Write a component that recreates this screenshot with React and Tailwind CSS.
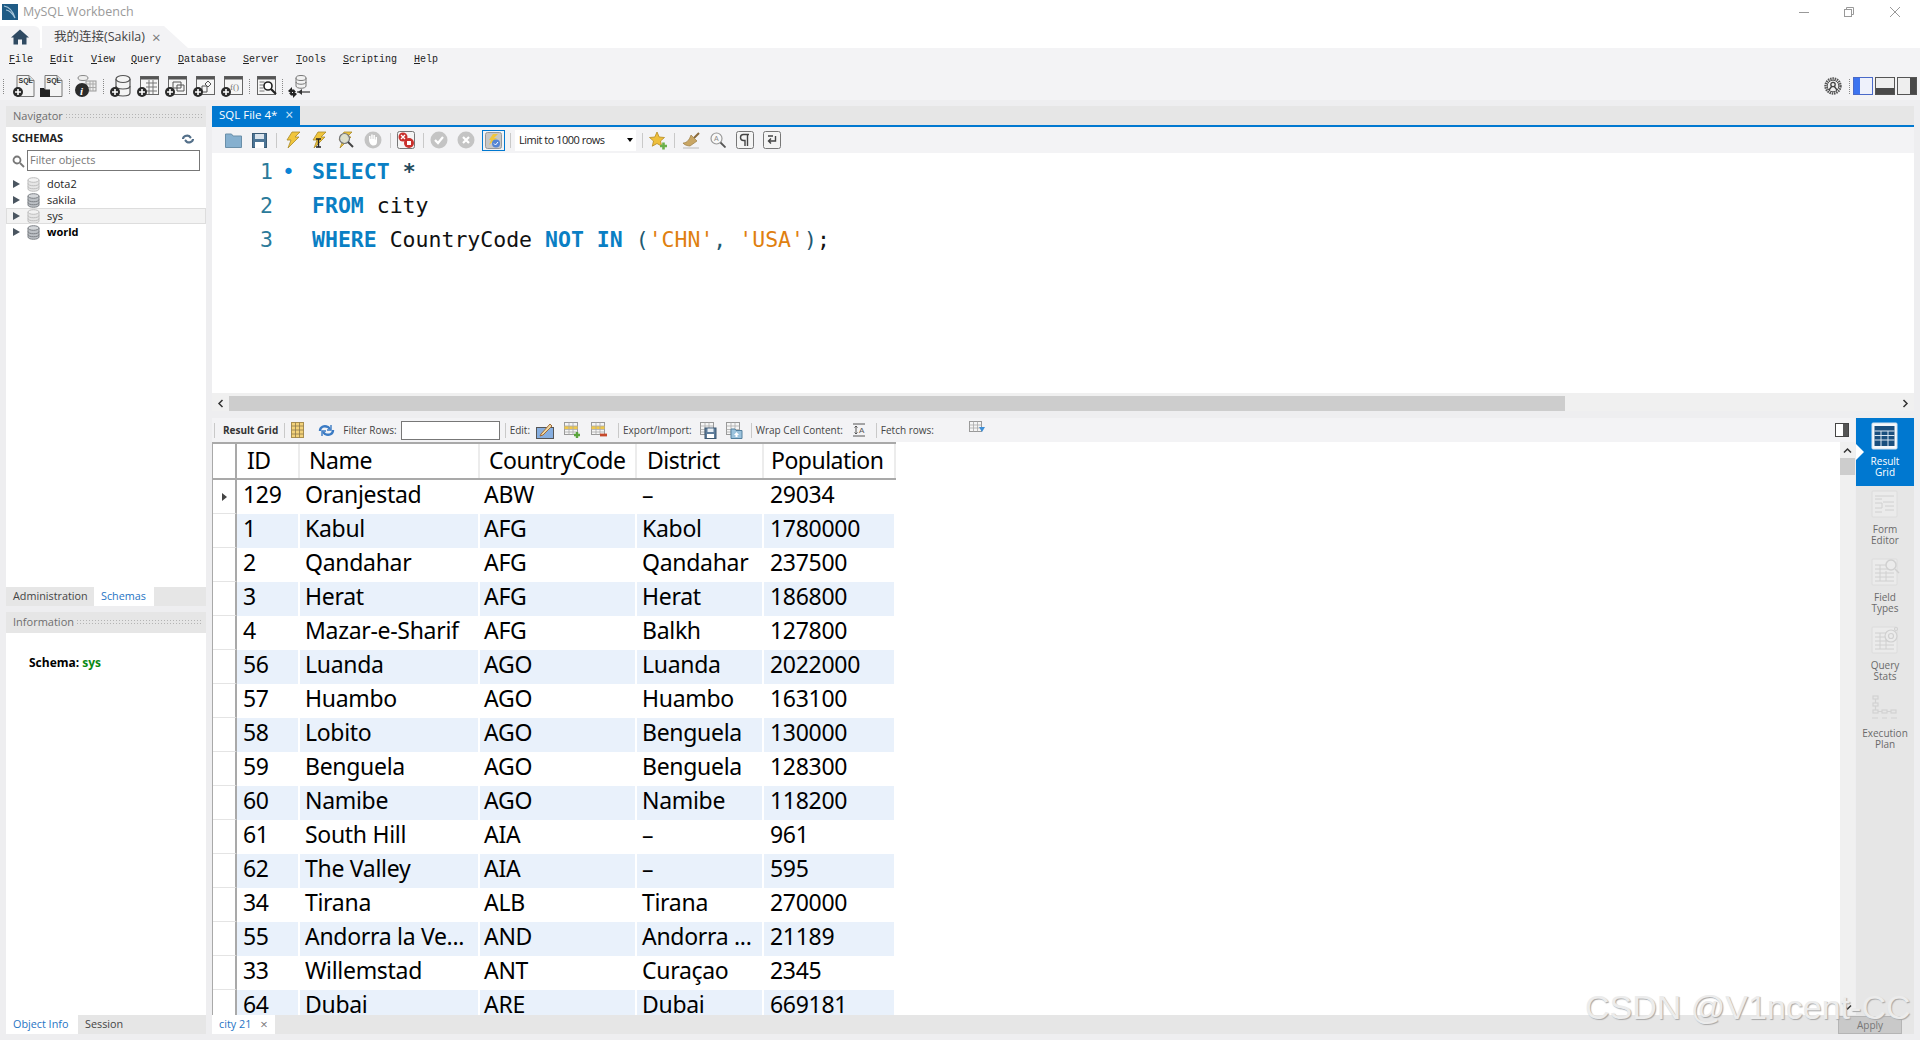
import React from 'react';

const rows = [
  ['129', 'Oranjestad', 'ABW', '–', '29034'],
  ['1', 'Kabul', 'AFG', 'Kabol', '1780000'],
  ['2', 'Qandahar', 'AFG', 'Qandahar', '237500'],
  ['3', 'Herat', 'AFG', 'Herat', '186800'],
  ['4', 'Mazar-e-Sharif', 'AFG', 'Balkh', '127800'],
  ['56', 'Luanda', 'AGO', 'Luanda', '2022000'],
  ['57', 'Huambo', 'AGO', 'Huambo', '163100'],
  ['58', 'Lobito', 'AGO', 'Benguela', '130000'],
  ['59', 'Benguela', 'AGO', 'Benguela', '128300'],
  ['60', 'Namibe', 'AGO', 'Namibe', '118200'],
  ['61', 'South Hill', 'AIA', '–', '961'],
  ['62', 'The Valley', 'AIA', '–', '595'],
  ['34', 'Tirana', 'ALB', 'Tirana', '270000'],
  ['55', 'Andorra la Ve...', 'AND', 'Andorra ...', '21189'],
  ['33', 'Willemstad', 'ANT', 'Curaçao', '2345'],
  ['64', 'Dubai', 'ARE', 'Dubai', '669181'],
];

const menus = [
  ['File', 'w-[41px]'], ['Edit', 'w-[41px]'], ['View', 'w-[40px]'], ['Query', 'w-[47px]'],
  ['Database', 'w-[65px]'], ['Server', 'w-[53px]'], ['Tools', 'w-[47px]'], ['Scripting', 'w-[71px]'], ['Help', 'w-[30px]'],
];

const colClasses = ['w-[63px] pl-[6px]', 'w-[180px] pl-[5px]', 'w-[157px] pl-[4px]', 'w-[127px] pl-[5px]', 'w-[132px] pl-[6px]'];

const uiFont = 'font-["Open_Sans",sans-serif]';

// main toolbar icons, all on a 24x24 box
const Plus = () => (
  <g>
    <circle cx="6" cy="18" r="5" fill="#2b2b2b" />
    <path d="M3 18h6M6 15v6" stroke="#fff" strokeWidth="1.6" />
  </g>
);

const SqlDoc = ({ folder }) => (
  <svg width="24" height="24" viewBox="0 0 24 24">
    <path d="M5 1.5h12l5 5v16H5z" fill="#f4f4f4" stroke="#777" />
    <path d="M17 1.500v5h5" fill="#ddd" stroke="#777" />
    <text x="6.500" y="9" fontSize="7" fontWeight="700" fill="#333" fontFamily="Liberation Sans">SQL</text>
    {folder ? <path d="M0 23v-9h4l1 1.500h5V23z" fill="#222" /> : <Plus />}
  </svg>
);

const InfoIcon = () => (
  <svg width="24" height="24" viewBox="0 0 24 24">
    <ellipse cx="9" cy="4" rx="5" ry="2.500" fill="#eee" stroke="#888" />
    <rect x="12" y="7" width="10" height="10" fill="#eee" stroke="#999" />
    <path d="M12 10h10M12 13.500h10M16 7v10M19 7v10" stroke="#aaa" />
    <circle cx="8" cy="16" r="7" fill="#2b2b2b" />
    <text x="6" y="20.500" fontSize="11" fontWeight="700" fontStyle="italic" fill="#fff" fontFamily="Liberation Serif">i</text>
  </svg>
);

const DbPlus = () => (
  <svg width="24" height="24" viewBox="0 0 24 24">
    <path d="M7 5v14c0 4 14 4 14 0V5" fill="#f4f4f4" stroke="#555" strokeWidth="1.200" />
    <ellipse cx="14" cy="5" rx="7" ry="3.500" fill="#f4f4f4" stroke="#555" strokeWidth="1.200" />
    <path d="M7 12c0 4 14 4 14 0" fill="none" stroke="#555" strokeWidth="1.200" />
    <Plus />
  </svg>
);

const Frame = ({ children, plus = true }) => (
  <svg width="24" height="24" viewBox="0 0 24 24">
    <rect x="4.500" y="2.500" width="18" height="18" fill="#f6f6f6" stroke="#666" />
    <rect x="4.500" y="2.500" width="18" height="3" fill="#555" />
    {children}
    {plus && <Plus />}
  </svg>
);

const Migration = () => (
  <svg width="24" height="24" viewBox="0 0 24 24">
    <path d="M9 4v8c0 3 10 3 10 0V4M9 8c0 3 10 3 10 0" fill="#f2f2f2" stroke="#777" />
    <ellipse cx="14" cy="4" rx="5" ry="2.500" fill="#f2f2f2" stroke="#777" />
    <path d="M10 18h13" stroke="#444" strokeWidth="1.300" />
    <path d="M1 17l4-4v2.500h2l2 2.500H5v2zM10 20l-4 4v-2.500H4L2 19h4v-2z" fill="#222" />
    <path d="M15 15l-4 3 4 3z" fill="#333" />
  </svg>
);

const Sep = ({ className = '' }) => <div className={`w-px h-[15px] bg-[#c9c9c9] shrink-0 ${className}`} />;
const DotSep = ({ className = '' }) => <div className={`w-px h-[15px] shrink-0 border-l border-dotted border-[#888] ${className}`} />;

// sql editor toolbar icons
const Bolt = ({ cursor, search }) => (
  <svg width="18" height="18" viewBox="0 0 18 18">
    <path d="M8 1h8l-5 5h4L4 17l3-8H3z" fill="#f0c53c" stroke="#a98a2a" strokeWidth=".8" />
    {cursor && <path d="M6 8h5M6 16h5M8.500 8v8" stroke="#222" strokeWidth="1.400" />}
    {search && (
      <g>
        <circle cx="8.500" cy="7.500" r="5" fill="#dbe6ef" fillOpacity=".8" stroke="#777" strokeWidth="1.200" />
        <path d="M12 11l5 5" stroke="#444" strokeWidth="2" />
      </g>
    )}
  </svg>
);

const Disc = ({ children }) => (
  <svg width="18" height="18" viewBox="0 0 18 18">
    <circle cx="9" cy="9" r="8.500" fill="#c4c4c4" />
    {children}
  </svg>
);

const SmallBox = ({ children }) => (
  <svg width="18" height="18" viewBox="0 0 18 18">
    <rect x=".5" y=".5" width="17" height="17" rx="2" fill="#f4f4f4" stroke="#777" />
    {children}
  </svg>
);

const GridIcon = ({ badge, yellow }) => (
  <svg width="18" height="18" viewBox="0 0 18 18">
    <rect x="1.500" y="1.500" width="13" height="12" fill="#f5f5f5" stroke="#999" />
    {yellow && <rect x="1.500" y="5" width="13" height="3" fill="#f0c84a" />}
    <path d="M1.500 5h13M1.500 8.500h13M1.500 11h13M6 1.500v12M10 1.500v12" stroke="#aaa" strokeWidth=".8" />
    {badge === 'add' && <path d="M11 14h6M14 11v6" stroke="#5aa43c" strokeWidth="2.400" />}
    {badge === 'del' && <path d="M10 14h7" stroke="#c6492c" strokeWidth="2.800" />}
    {badge === 'save' && (
      <g>
        <rect x="6" y="7" width="11" height="10.500" fill="#5d7c9b" stroke="#3c5770" />
        <rect x="8.500" y="7.500" width="6" height="3.500" fill="#e8eef4" />
        <rect x="8" y="13" width="7" height="4" fill="#fff" />
      </g>
    )}
    {badge === 'import' && (
      <g>
        <path d="M6 8h4l1 1.500h6V17.500H6z" fill="#9cc3dd" stroke="#54809e" />
        <path d="M11.500 11l-2.500 3h1.500v2h2v-2H14z" fill="#fff" />
      </g>
    )}
  </svg>
);

const SideIcon = ({ type, active }) => {
  if (type === 'plan') {
    return (
      <svg width="28" height="28" viewBox="0 0 28 28" fill="none" stroke="#d2d2d2" strokeWidth="1.200">
        <rect x="2" y="2" width="5" height="3" />
        <rect x="2" y="9" width="5" height="3" />
        <rect x="2" y="16" width="5" height="3" />
        <rect x="11" y="16" width="5" height="3" />
        <rect x="20" y="16" width="5" height="3" />
        <path d="M7 17.500h4M16 17.500h4M1 24h6M11 24h5M20 24h6M4.500 5v4M4.500 12v4" />
      </svg>
    );
  }
  const line = active ? '#1f5a8a' : '#d0d0d0';
  return (
    <svg width="30" height="28" viewBox="0 0 30 28">
      <rect x="2" y="1" width="25" height="26" rx="1" fill={active ? '#f5f8fb' : '#ebebeb'} stroke={active ? '#cfe0ee' : '#dcdcdc'} />
      {active && (
        <g>
          <rect x="4.500" y="4" width="20" height="20" fill="#1a4f7e" />
          <path d="M4.500 9h20M4.500 13.500h20M4.500 18h20M11 9v15M18 9v15" stroke="#dce8f2" strokeWidth="1" />
        </g>
      )}
      {type === 'form' && <path d="M5 6h19M5 9h7M5 13h7v5H5M13 12h11M15 16h9M15 20h9M5 22h7" fill="none" stroke={line} />}
      {(type === 'field' || type === 'stats') && (
        <path d="M5 7h12M5 11h13M5 15h19M5 19h19M5 23h19M10 7v16M16 13v10" fill="none" stroke={line} />
      )}
      {type === 'field' && (
        <g fill="#ebebeb" stroke="#d0d0d0" strokeWidth="1.500">
          <circle cx="21" cy="7" r="5" />
          <path d="M25 11l4 4" />
        </g>
      )}
      {type === 'stats' && (
        <g fill="#ebebeb" stroke="#d0d0d0" strokeWidth="1.200">
          <circle cx="21" cy="10" r="6" />
          <circle cx="21" cy="10" r="2.500" />
          <circle cx="26" cy="3" r="1.500" />
        </g>
      )}
    </svg>
  );
};

const DbIcon = ({ dark }) => (
  <svg width="13" height="15" viewBox="0 0 13 15">
    <path d="M1 3v9c0 3 11 3 11 0V3" fill={dark ? '#bcc0c5' : '#e6e6e6'} stroke={dark ? '#7d8186' : '#bdbdbd'} />
    <ellipse cx="6.500" cy="3" rx="5.500" ry="2.300" fill={dark ? '#d4d7da' : '#f2f2f2'} stroke={dark ? '#7d8186' : '#bdbdbd'} />
    <path d="M1 6.500c0 3 11 3 11 0M1 9.500c0 3 11 3 11 0" fill="none" stroke={dark ? '#7d8186' : '#bdbdbd'} />
  </svg>
);

const TreeRow = ({ name, dark, bold, selected }) => (
  <div className={`flex items-center h-4 pl-[7px] ${selected ? 'bg-[#f3f3f3] outline outline-[#dddddd] -outline-offset-1' : ''}`}>
    <span className="w-0 h-0 border-y-[4px] border-y-transparent border-l-[7px] border-l-[#4a5560]" />
    <span className="ml-[7px] flex"><DbIcon dark={dark} /></span>
    <span className={`ml-[7px] text-[11px] ${bold ? 'font-bold text-black' : 'text-[#222]'}`}>{name}</span>
  </div>
);

const PanelHeader = ({ title }) => (
  <div className="h-[21px] bg-[#e6e6e6] flex items-center pl-[7px] pr-1 gap-[2px] shrink-0">
    <span className="text-[11px] text-[#6e6e6e]">{title}</span>
    <div className="flex-1 h-[7px] bg-[radial-gradient(#b4b4b4_1px,transparent_1px)] bg-[length:3px_3px]" />
  </div>
);

const Tab = ({ label, active, w, close }) => (
  <div className={`h-[19px] flex items-center pb-px text-[10.800px] ${w} ${active ? 'bg-white text-[#1f74c4]' : 'text-[#444]'}`}>
    <span className="pl-[7px]">{label}</span>
    {close && <span className="ml-[9px] text-[13px] leading-none text-[#777]">×</span>}
  </div>
);

const GridHeadCell = ({ children, className }) => (
  <div className={`h-[34px] flex items-center pb-[2px] border-r-2 border-[#ececec] tracking-[-0.5px] ${className}`}>{children}</div>
);

export default function App() {
  return (
    <div className={`relative w-[1920px] h-[1040px] overflow-hidden flex flex-col bg-[#eeeef0] ${uiFont}`}>
      {/* title bar */}
      <div className="h-[26px] bg-white flex items-center pb-[2px] shrink-0">
        <svg className="ml-[2px]" width="16" height="16" viewBox="0 0 16 16">
          <rect width="16" height="16" fill="#1f5c86" />
          <path d="M2 2c6 1 9 5 11 12-3-5-6-8-9-8" fill="none" stroke="#a8c6da" strokeWidth="1.200" />
        </svg>
        <span className="ml-[5px] text-[12.500px] text-[#9a9a9a]">MySQL Workbench</span>
        <div className="ml-auto flex items-center">
          <div className="w-[10px] h-px bg-[#999] mr-[35px]" />
          <svg className="mr-[35px]" width="10" height="10" viewBox="0 0 10 10" fill="none" stroke="#999">
            <path d="M2.500 2.500V.5h7v7h-2" />
            <rect x=".5" y="2.500" width="7" height="7" />
          </svg>
          <svg className="mr-[19px]" width="12" height="12" viewBox="0 0 12 12" stroke="#999">
            <path d="M1 1l10 10M11 1L1 11" />
          </svg>
        </div>
      </div>

      {/* connection tabs */}
      <div className="h-[22px] bg-white flex items-end shrink-0">
        <div className="w-[40px] h-[22px] bg-[#f3f3f5] rounded-tr-md flex items-center justify-center">
          <svg width="18" height="16" viewBox="0 0 18 16" fill="#2f4a62">
            <path d="M9 .5L0 8.500h2.500V15.500h4.500v-5h4v5h4.500V8.500H18z" />
          </svg>
        </div>
        <div className="w-[146px] h-[22px] ml-[2px] bg-[#f3f3f5] flex items-center pl-[12px] text-[12.500px] text-[#444] [clip-path:polygon(0_0,122px_0,100%_100%,0_100%)] font-['Open_Sans','Noto_Sans_CJK_SC',sans-serif]">
          我的连接(Sakila)
          <span className="ml-[7px] text-[15px] leading-none text-[#777]">×</span>
        </div>
      </div>

      {/* menu */}
      <div className="h-[22px] bg-[#f3f3f5] flex items-center pl-[9px] shrink-0 font-['Liberation_Mono',monospace] text-[10px] text-[#222]">
        {menus.map(([label, w]) => (
          <span key={label} className={w}>
            <span className="underline">{label[0]}</span>
            {label.slice(1)}
          </span>
        ))}
      </div>

      {/* main toolbar */}
      <div className="h-[30px] bg-[#f3f3f5] flex items-center pl-[3px] pt-[2px] shrink-0">
        <DotSep />
        <div className="ml-[8px] flex"><SqlDoc /></div>
        <div className="ml-[4px] flex"><SqlDoc folder /></div>
        <DotSep className="ml-[5px]" />
        <div className="ml-[4px] flex"><InfoIcon /></div>
        <DotSep className="ml-[5px]" />
        <div className="ml-[5px] flex"><DbPlus /></div>
        <div className="ml-[3px] flex">
          <Frame><path d="M10 9h11M10 13h11M10 17h11M13 6v14M17 6v14" stroke="#777" /></Frame>
        </div>
        <div className="ml-[4px] flex">
          <Frame><path d="M9 8h8v6H9zM13 11h7v6h-7z" fill="#f6f6f6" stroke="#555" /></Frame>
        </div>
        <div className="ml-[4px] flex">
          <Frame><path d="M16 7l3 3-3 3-3-3zM10 12h5v6h-5z" fill="#f6f6f6" stroke="#555" /></Frame>
        </div>
        <div className="ml-[4px] flex">
          <Frame>
            <text x="10" y="16" fontSize="9" fill="#777" fontFamily="Liberation Serif">f()</text>
          </Frame>
        </div>
        <DotSep className="ml-[5px]" />
        <div className="ml-[3px] flex">
          <Frame plus={false}>
            <path d="M6.500 8h5M6.500 11h4M6.500 14h4M6.500 17h5" stroke="#777" />
            <circle cx="15" cy="12" r="4" fill="#fff" stroke="#222" strokeWidth="1.600" />
            <path d="M18 15l5 5" stroke="#222" strokeWidth="2.200" />
          </Frame>
        </div>
        <DotSep className="ml-[5px]" />
        <div className="ml-[4px] flex"><Migration /></div>
        <div className="ml-auto flex items-center">
          <svg width="18" height="18" viewBox="0 0 18 18">
            <circle cx="9" cy="9" r="7.500" fill="none" stroke="#555" strokeWidth="2.400" strokeDasharray="1.500 .8" />
            <circle cx="9" cy="9" r="5.800" fill="#eee" stroke="#555" />
            <circle cx="9" cy="7.500" r="2.200" fill="none" stroke="#444" strokeWidth="1.300" />
            <path d="M5 13l3-4M13 13l-3-4" stroke="#444" strokeWidth="1.300" />
          </svg>
          <DotSep className="ml-[7px]" />
          <div className="ml-[3px] w-[20px] h-[18px] border border-[#4a69c8] bg-[#eef1fb] flex">
            <div className="w-[6px] bg-[#3d74f0]" />
          </div>
          <div className="ml-[2px] w-[20px] h-[18px] border border-[#555] bg-[#eee] flex items-end">
            <div className="w-full h-[6px] bg-[#4a4a4a]" />
          </div>
          <div className="ml-[2px] w-[20px] h-[18px] border border-[#555] bg-[#eee] flex justify-end">
            <div className="w-[6px] bg-[#4a4a4a]" />
          </div>
          <div className="w-[3px]" />
        </div>
      </div>

      {/* body */}
      <div className="flex-1 flex pt-[6px] pl-[6px] pr-[6px] pb-[6px] min-h-0">
        {/* navigator */}
        <div className="w-[200px] shrink-0 flex flex-col">
          <PanelHeader title="Navigator" />
          <div className="h-[460px] bg-white">
            <div className="h-[23px] flex items-center justify-between pl-[6px] pr-[12px]">
              <span className="text-[11px] font-bold tracking-[-0.1px] text-[#222]">SCHEMAS</span>
              <svg width="12" height="10" viewBox="0 0 12 10" fill="none" stroke="#54708a" strokeWidth="2.200">
                <path d="M1 5c0-3 4-4 6-3l2 2M11 5c0 3-4 4-6 3L3 6" />
              </svg>
            </div>
            <div className="flex items-center pl-[5px] h-[21px]">
              <svg width="14" height="14" viewBox="0 0 14 14" fill="none" stroke="#777" strokeWidth="1.800">
                <circle cx="6" cy="6" r="3.500" />
                <path d="M9 9l4 4" />
              </svg>
              <div className="ml-[2px] w-[173px] h-[21px] border border-[#777] text-[11px] text-[#777] pl-[2px] flex items-center">
                Filter objects
              </div>
            </div>
            <div className="pt-[5px]">
              <TreeRow name="dota2" />
              <TreeRow name="sakila" dark />
              <TreeRow name="sys" selected />
              <TreeRow name="world" dark bold />
            </div>
          </div>
          <div className="h-[19px] bg-[#e6e6e6] flex shrink-0">
            <Tab label="Administration" w="w-[88px]" />
            <Tab label="Schemas" w="w-[60px]" active />
          </div>
          <div className="h-[6px] shrink-0" />
          <PanelHeader title="Information" />
          <div className="flex-1 bg-white pl-[23px] pt-[21px] text-[12px] font-bold text-black">
            Schema: <span className="text-[#0a8a14]">sys</span>
          </div>
          <div className="h-[19px] bg-[#e6e6e6] flex shrink-0">
            <Tab label="Object Info" w="w-[72px]" active />
            <Tab label="Session" w="w-[60px]" />
          </div>
        </div>

        {/* main area */}
        <div className="ml-[6px] flex-1 flex flex-col min-w-0">
          {/* sql tab strip */}
          <div className="h-[21px] shrink-0 flex bg-[#e6e6e6] border-b-2 border-[#0078d0]">
            <div className="w-[88px] bg-[#0078d0] text-white text-[11.500px] pl-[7px] pb-px flex items-center">
              SQL File 4*
              <span className="ml-[8px] text-[14px] leading-none text-[#cfe4f5]">×</span>
            </div>
          </div>

          {/* editor toolbar */}
          <div className="h-[26px] shrink-0 bg-[#f3f3f5] flex items-center pl-[13px]">
            <svg width="17" height="15" viewBox="0 0 17 15">
              <path d="M.5 14.500V1h6l1.500 2h8.500v11.500z" fill="#86b0cf" stroke="#6a8fa9" />
            </svg>
            <svg className="ml-[10px]" width="15" height="15" viewBox="0 0 15 15">
              <rect x=".5" y=".5" width="14" height="14" fill="#4d7596" stroke="#3b5b75" />
              <rect x="3" y="1" width="9" height="5" fill="#dbe4ec" />
              <rect x="3" y="9" width="9" height="6" fill="#fff" />
            </svg>
            <Sep className="ml-[9px]" />
            <div className="ml-[7px] flex"><Bolt /></div>
            <div className="ml-[8px] flex"><Bolt cursor /></div>
            <div className="ml-[8px] flex"><Bolt search /></div>
            <div className="ml-[10px] flex">
              <Disc>
                <path d="M5 9V5h1.500v3h.7V3.500h1.500V8h.7V4h1.500v4.500h.7V6h1.400v5c0 2.500-1.500 3.500-3.500 3.500S5.500 13 5 9z" fill="#fff" />
              </Disc>
            </div>
            <Sep className="ml-[8px]" />
            <div className="ml-[6px] flex">
              <SmallBox>
                <circle cx="6" cy="6" r="4.500" fill="#c9302c" />
                <path d="M4 4l4 4M8 4l-4 4" stroke="#fff" strokeWidth="1.300" />
                <circle cx="12" cy="12" r="5" fill="#c9302c" />
                <rect x="10" y="10" width="4" height="4" fill="#fff" />
              </SmallBox>
            </div>
            <Sep className="ml-[8px]" />
            <div className="ml-[6px] flex">
              <Disc><path d="M5 9l3 3 5-6" fill="none" stroke="#fff" strokeWidth="2.200" /></Disc>
            </div>
            <div className="ml-[9px] flex">
              <Disc><path d="M6 6l6 6M12 6l-6 6" stroke="#fff" strokeWidth="2.200" /></Disc>
            </div>
            <div className="ml-[7px] w-[23px] h-[21px] border border-[#0078d0] flex items-center justify-center">
              <svg width="17" height="17" viewBox="0 0 17 17">
                <rect x=".5" y=".5" width="16" height="16" rx="2" fill="#c8c8c8" stroke="#999" />
                <path d="M8 2h5L9 6h3L4 13l2-5H4z" fill="#efc63e" />
                <circle cx="11" cy="11.500" r="4" fill="#5484d4" />
                <path d="M9 11.500l1.500 1.500 2.500-3" fill="none" stroke="#fff" />
              </svg>
            </div>
            <Sep className="ml-[5px]" />
            <div className="ml-[4px] w-[121px] h-[21px] bg-white flex items-center pl-[4px] text-[11px] tracking-[-0.5px] text-[#222] relative">
              Limit to 1000 rows
              <span className="absolute right-[3px] top-[8px] w-0 h-0 border-x-[3px] border-x-transparent border-t-[4px] border-t-black" />
            </div>
            <Sep className="ml-[6px]" />
            <svg className="ml-[6px]" width="19" height="19" viewBox="0 0 19 19">
              <path d="M8 1l2.200 5 5.300.5-4 3.500 1.200 5.200L8 12.500 3.300 15.200l1.200-5.200-4-3.500L5.800 6z" fill="#eebf3c" stroke="#b58c22" strokeWidth=".8" />
              <path d="M11 15h7M14.500 11.500v7" stroke="#6bb04a" strokeWidth="2.600" />
            </svg>
            <Sep className="ml-[6px]" />
            <svg className="ml-[7px]" width="19" height="17" viewBox="0 0 19 17">
              <path d="M12 6l5-5" stroke="#8a6a3a" strokeWidth="2" />
              <path d="M9 3l6 6-7 5c-2 0-6-1-7-3 3 0 6-2 8-8z" fill="#c9a664" stroke="#9b7c43" strokeWidth=".7" />
              <path d="M1 16h16" stroke="#ccc" strokeWidth="1.500" />
            </svg>
            <svg className="ml-[9px]" width="16" height="16" viewBox="0 0 16 16" fill="none">
              <circle cx="6.500" cy="6.500" r="5.500" fill="#f8f8f8" stroke="#999" strokeWidth="1.200" />
              <path d="M10.500 10.500l5 5" stroke="#555" strokeWidth="1.800" />
              <text x="4" y="9" fontSize="7" fill="#888" fontFamily="Liberation Sans">A</text>
            </svg>
            <div className="ml-[10px] flex">
              <SmallBox>
                <path d="M13 3.500H7.500a3 3 0 0 0 0 6H9V15M11.500 3.500V15" fill="none" stroke="#444" strokeWidth="1.400" />
              </SmallBox>
            </div>
            <div className="ml-[9px] flex">
              <SmallBox>
                <path d="M12.500 5v5H6M8 7.500L5.500 10 8 12.500M5 5h5" fill="none" stroke="#444" strokeWidth="1.400" />
              </SmallBox>
            </div>
          </div>

          {/* editor */}
          <div className="h-[240px] shrink-0 bg-white pt-[2px] font-['DejaVu_Sans_Mono',monospace] text-[21.500px] leading-[34px] text-[#111]">
            <div className="flex">
              <span className="w-[61px] text-right text-[#2b7a9a]">1</span>
              <span className="w-[39px] pl-[9px] text-[#0a84d6]">•</span>
              <span><span className="font-bold text-[#0a7fc4]">SELECT</span> <span className="text-[#1f4a5c] font-bold">*</span></span>
            </div>
            <div className="flex">
              <span className="w-[61px] text-right text-[#2b7a9a]">2</span>
              <span className="w-[39px]" />
              <span><span className="font-bold text-[#0a7fc4]">FROM</span> city</span>
            </div>
            <div className="flex">
              <span className="w-[61px] text-right text-[#2b7a9a]">3</span>
              <span className="w-[39px]" />
              <span>
                <span className="font-bold text-[#0a7fc4]">WHERE</span> CountryCode{' '}
                <span className="font-bold text-[#0a7fc4]">NOT</span>{' '}
                <span className="font-bold text-[#0a7fc4]">IN</span>{' '}
                <span className="text-[#1f5a72]">(</span>
                <span className="text-[#e0800f]">'CHN'</span>
                <span className="text-[#1f5a72]">,</span>{' '}
                <span className="text-[#e0800f]">'USA'</span>
                <span className="text-[#1f5a72]">)</span>;
              </span>
            </div>
          </div>

          {/* editor scrollbar */}
          <div className="h-[18px] shrink-0 bg-[#f0f0f0] flex items-center pt-[3px]">
            <div className="w-[17px] flex justify-center">
              <svg width="7" height="9" viewBox="0 0 7 9" fill="none" stroke="#333" strokeWidth="1.500"><path d="M5.500 1L2 4.500 5.500 8" /></svg>
            </div>
            <div className="w-[1336px] h-[15px] bg-[#cdcdcd]" />
            <div className="ml-auto w-[17px] flex justify-center">
              <svg width="7" height="9" viewBox="0 0 7 9" fill="none" stroke="#333" strokeWidth="1.500"><path d="M1.500 1L5 4.500 1.500 8" /></svg>
            </div>
          </div>

          {/* result area */}
          <div className="h-[7px] shrink-0" />
          <div className="flex-1 flex min-h-0">
            <div className="flex-1 flex flex-col min-w-0">
              <div className="h-[24px] shrink-0 bg-[#f3f3f5] flex items-center pl-[2px] text-[10px] text-[#444]">
                <Sep />
                <span className="ml-[8px] font-bold text-[#333]">Result Grid</span>
                <Sep className="ml-[6px]" />
                <svg className="ml-[6px]" width="13" height="16" viewBox="0 0 13 16">
                  <rect x=".5" y=".5" width="12" height="15" fill="#f3d27a" stroke="#a98f50" />
                  <path d="M4.500 .5v15M8.500 .5v15M.5 4h12M.5 8h12M.5 12h12" stroke="#8d7a4c" strokeWidth=".8" />
                </svg>
                <svg className="ml-[14px]" width="17" height="15" viewBox="0 0 17 15" fill="none" stroke="#3b7bc4" strokeWidth="2.400">
                  <path d="M2 8c0-4 4-6 8-4l2 2M15 7c0 4-4 6-8 4L5 9" />
                  <path d="M13 2v5H9M4 13V8h4" strokeWidth="1.400" />
                </svg>
                <span className="ml-[8px]">Filter Rows:</span>
                <div className="ml-[4px] w-[99px] h-[19px] bg-white border border-[#777]" />
                <Sep className="ml-[5px]" />
                <span className="ml-[4px]">Edit:</span>
                <svg className="ml-[6px]" width="18" height="18" viewBox="0 0 18 18">
                  <rect x=".5" y="6.500" width="17" height="11" fill="#86aee0" stroke="#555" />
                  <path d="M5 13L14 3l2 2-9 9-3 1z" fill="#f1d9a0" stroke="#a06a3a" />
                </svg>
                <div className="ml-[9px] flex"><GridIcon yellow badge="add" /></div>
                <div className="ml-[9px] flex"><GridIcon yellow badge="del" /></div>
                <Sep className="ml-[10px]" />
                <span className="ml-[4px]">Export/Import:</span>
                <div className="ml-[7px] flex"><GridIcon badge="save" /></div>
                <div className="ml-[8px] flex"><GridIcon badge="import" /></div>
                <Sep className="ml-[8px]" />
                <span className="ml-[4px]">Wrap Cell Content:</span>
                <svg className="ml-[10px]" width="12" height="14" viewBox="0 0 12 14" fill="none" stroke="#555">
                  <path d="M0 1h12M0 13h12M3 3v8M1.500 4.500L3 3l1.500 1.500M1.500 9.500L3 11l1.500-1.500" />
                  <text x="6" y="10" fontSize="8" fill="#555" stroke="none" fontFamily="Liberation Sans">A</text>
                </svg>
                <Sep className="ml-[11px]" />
                <span className="ml-[4px]">Fetch rows:</span>
                <svg className="ml-[35px] mb-[4px]" width="17" height="14" viewBox="0 0 17 14">
                  <rect x=".5" y=".5" width="12" height="10" fill="#f5f5f5" stroke="#999" />
                  <path d="M.5 4h12M.5 7h12M4.500 .5v10M8.500 .5v10" stroke="#aaa" strokeWidth=".8" />
                  <path d="M10 6h6l-3 5z" fill="#3f8fd6" />
                </svg>
                <div className="ml-auto mr-[6px] w-[14px] h-[14px] border border-[#444] bg-white flex justify-end">
                  <div className="w-[5px] bg-[#555]" />
                </div>
              </div>

              <div className="flex-1 flex min-h-0 bg-white">
                {/* data grid */}
                <div className="flex-1 min-w-0 overflow-hidden font-['Noto_Sans',sans-serif] text-[23px] tracking-[-0.3px] text-black">
                  <div className="w-[684px] border-t-2 border-[#a9a9a9] border-l border-l-[#a9a9a9]">
                    <div className="flex border-b-2 border-[#a9a9a9]">
                      <div className="w-[24px] h-[34px] border-r-2 border-[#a9a9a9]" />
                      <GridHeadCell className="w-[63px] pl-[10px]">ID</GridHeadCell>
                      <GridHeadCell className="w-[180px] pl-[9px]">Name</GridHeadCell>
                      <GridHeadCell className="w-[157px] pl-[9px]">CountryCode</GridHeadCell>
                      <GridHeadCell className="w-[127px] pl-[10px]">District</GridHeadCell>
                      <GridHeadCell className="w-[132px] pl-[7px]">Population</GridHeadCell>
                    </div>
                    {rows.map((r, i) => (
                      <div key={r[0]} className="flex h-[34px] leading-[29px]">
                        <div className="w-[24px] border-r-2 border-[#a9a9a9] border-b border-b-[#e4e4e4] flex items-center justify-center">
                          {i === 0 && <span className="w-0 h-0 border-y-[4px] border-y-transparent border-l-[5px] border-l-[#444]" />}
                        </div>
                        {r.map((v, j) => (
                          <div
                            key={j}
                            className={`border-r-2 whitespace-nowrap ${colClasses[j]} ${i % 2 ? 'bg-[#e9f1fb] border-white' : 'border-transparent'}`}
                          >
                            {v}
                          </div>
                        ))}
                      </div>
                    ))}
                  </div>
                </div>
                {/* vertical scrollbar */}
                <div className="w-[15px] bg-[#f0f0f0] flex flex-col items-center shrink-0">
                  <svg className="mt-[5px]" width="9" height="7" viewBox="0 0 9 7" fill="none" stroke="#333" strokeWidth="1.500"><path d="M1 5.500L4.500 2 8 5.500" /></svg>
                  <div className="mt-[4px] w-full h-[17px] bg-[#cdcdcd]" />
                  <svg className="mt-auto mb-[4px]" width="9" height="7" viewBox="0 0 9 7" fill="none" stroke="#333" strokeWidth="1.500"><path d="M1 1.500L4.500 5 8 1.500" /></svg>
                </div>
              </div>
            </div>

            {/* side tabs */}
            <div className="ml-px w-[58px] shrink-0 bg-[#e6e6e6] flex flex-col text-[10px] leading-[11px] text-center text-[#6a6a6a]">
              <div className="relative h-[68px] bg-[#0078d0] text-white flex flex-col items-center pt-[4px] gap-[6px]">
                <span className="absolute left-0 top-[26px] w-0 h-0 border-y-[8px] border-y-transparent border-l-[8px] border-l-white" />
                <SideIcon type="grid" active />
                <span>Result<br />Grid</span>
              </div>
              <div className="h-[68px] flex flex-col items-center pt-[4px] gap-[6px]">
                <SideIcon type="form" />
                <span>Form<br />Editor</span>
              </div>
              <div className="h-[68px] flex flex-col items-center pt-[4px] gap-[6px]">
                <SideIcon type="field" />
                <span>Field<br />Types</span>
              </div>
              <div className="h-[68px] flex flex-col items-center pt-[4px] gap-[6px]">
                <SideIcon type="stats" />
                <span>Query<br />Stats</span>
              </div>
              <div className="h-[68px] flex flex-col items-center pt-[4px] gap-[6px]">
                <SideIcon type="plan" />
                <span>Execution<br />Plan</span>
              </div>
            </div>
          </div>

          {/* result tabs */}
          <div className="h-[19px] shrink-0 bg-[#e6e6e6] flex items-center">
            <Tab label="city 21" w="w-[63px]" active close />
            <div className="ml-auto mr-[12px] w-[64px] h-[18px] mt-px bg-[#c9c9c9] border border-[#b5b5b5] text-[10px] text-[#777] flex items-center justify-center">
              Apply
            </div>
          </div>
        </div>
      </div>

      {/* csdn watermark */}
      <div className="absolute left-[1585px] top-[985px] font-['Liberation_Sans',sans-serif] text-[34px] leading-[44px] whitespace-nowrap text-[#ececec] [text-shadow:1px_1px_1px_#a8a8a8]">
        CSDN @V1ncent-CC
      </div>
    </div>
  );
}
